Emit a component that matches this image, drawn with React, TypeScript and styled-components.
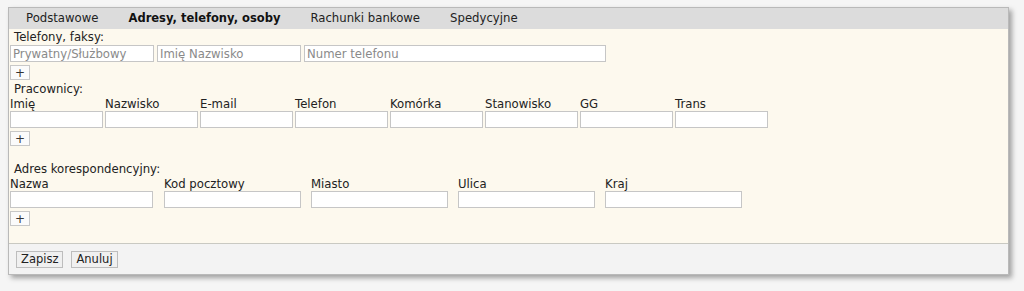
import styled, { createGlobalStyle } from "styled-components";

const Global = createGlobalStyle`
  body {
    margin: 0;
    background: #f5f5f5;
    font-family: "DejaVu Sans", Verdana, sans-serif;
    font-size: 11.7px;
    color: #222;
  }
`;

const tabs = ["Podstawowe", "Adresy, telefony, osoby", "Rachunki bankowe", "Spedycyjne"];
const workers = ["Imię", "Nazwisko", "E-mail", "Telefon", "Komórka", "Stanowisko", "GG", "Trans"];
const address = ["Nazwa", "Kod pocztowy", "Miasto", "Ulica", "Kraj"];

const App = () => {
  return (
    <Page>
      <Global />
      <Panel>
        <TabBar>
          {tabs.map((t, i) => (
            <Tab key={t} active={i === 1}>
              {t}
            </Tab>
          ))}
        </TabBar>
        <Content>
          <Title>Telefony, faksy:</Title>
          <PhoneRow>
            <Field w={144} placeholder="Prywatny/Służbowy" />
            <Field w={144} placeholder="Imię Nazwisko" />
            <Field w={302} placeholder="Numer telefonu" />
          </PhoneRow>
          <AddButton>+</AddButton>

          <Title>Pracownicy:</Title>
          <WorkerGrid>
            {workers.map((w) => (
              <Label key={w}>{w}</Label>
            ))}
            {workers.map((w) => (
              <Field key={w} w={93} />
            ))}
          </WorkerGrid>
          <AddButton>+</AddButton>

          <Title spaced>Adres korespondencyjny:</Title>
          <AddressGrid>
            {address.map((a) => (
              <Label key={a}>{a}</Label>
            ))}
            {address.map((a, i) => (
              <Field key={a} w={i === 0 ? 143 : 137} />
            ))}
          </AddressGrid>
          <AddButton>+</AddButton>
        </Content>
        <Footer>
          <FootButton>Zapisz</FootButton>
          <FootButton>Anuluj</FootButton>
        </Footer>
      </Panel>
    </Page>
  );
};

export default App;

const Page = styled.div`
  padding: 7px 0 0 8px;
  height: 284px;
`;

const Panel = styled.div`
  width: 999px;
  border: 1px solid #b9b9b9;
  box-shadow: 3px 3px 5px rgba(0, 0, 0, 0.35);
  background: #fdf9ee;
`;

const TabBar = styled.div`
  height: 21px;
  background: #dcdcdc;
  display: flex;
  align-items: center;
  padding-left: 2px;
`;

const Tab = styled.div<{ active?: boolean }>`
  padding: 0 15px;
  line-height: 21px;
  font-weight: ${(p) => (p.active ? "bold" : "normal")};
  font-size: ${(p) => (p.active ? "11.5px" : "11.7px")};
  color: ${(p) => (p.active ? "#111" : "#222")};
`;

const Content = styled.div`
  padding: 1px 0 15px 1px;
  border-bottom: 1px solid #c9c9c2;
`;

const Title = styled.div<{ spaced?: boolean }>`
  line-height: 15px;
  padding-left: 4px;
  margin-top: ${(p) => (p.spaced ? "16px" : "0")};
`;

const PhoneRow = styled.div`
  display: flex;
  gap: 3px;
`;

const Field = styled.input<{ w: number }>`
  box-sizing: border-box;
  width: ${(p) => p.w}px;
  height: 17px;
  margin: 0;
  padding: 0 2px;
  border: 1px solid #c6c6c6;
  background: #fff;
  font-family: "DejaVu Sans", Verdana, sans-serif;
  font-size: 11.7px;
  &::placeholder {
    color: #8a8a8a;
  }
`;

const AddButton = styled.button`
  display: flex;
  align-items: center;
  justify-content: center;
  box-sizing: border-box;
  width: 20px;
  height: 15px;
  margin: 3px 0 2px;
  padding: 0;
  border: 1px solid #c8c8c8;
  background: #fbfbfb;
  font-family: "DejaVu Sans", Verdana, sans-serif;
  font-size: 12px;
  color: #333;
`;

const Label = styled.div`
  line-height: 14px;
`;

const WorkerGrid = styled.div`
  display: grid;
  grid-template-columns: repeat(8, 93px);
  column-gap: 2px;
`;

const AddressGrid = styled.div`
  display: grid;
  grid-template-columns: 154px repeat(4, 147px);
`;

const Footer = styled.div`
  background: #f3f3f3;
  height: 30px;
  display: flex;
  align-items: center;
  gap: 8px;
  padding-left: 7px;
`;

const FootButton = styled.button`
  box-sizing: border-box;
  height: 17px;
  padding: 0 4px;
  border: 1px solid #bdbdbd;
  background: #f0f0f0;
  font-family: "DejaVu Sans", Verdana, sans-serif;
  font-size: 11.5px;
  line-height: 15px;
  color: #222;
`;
